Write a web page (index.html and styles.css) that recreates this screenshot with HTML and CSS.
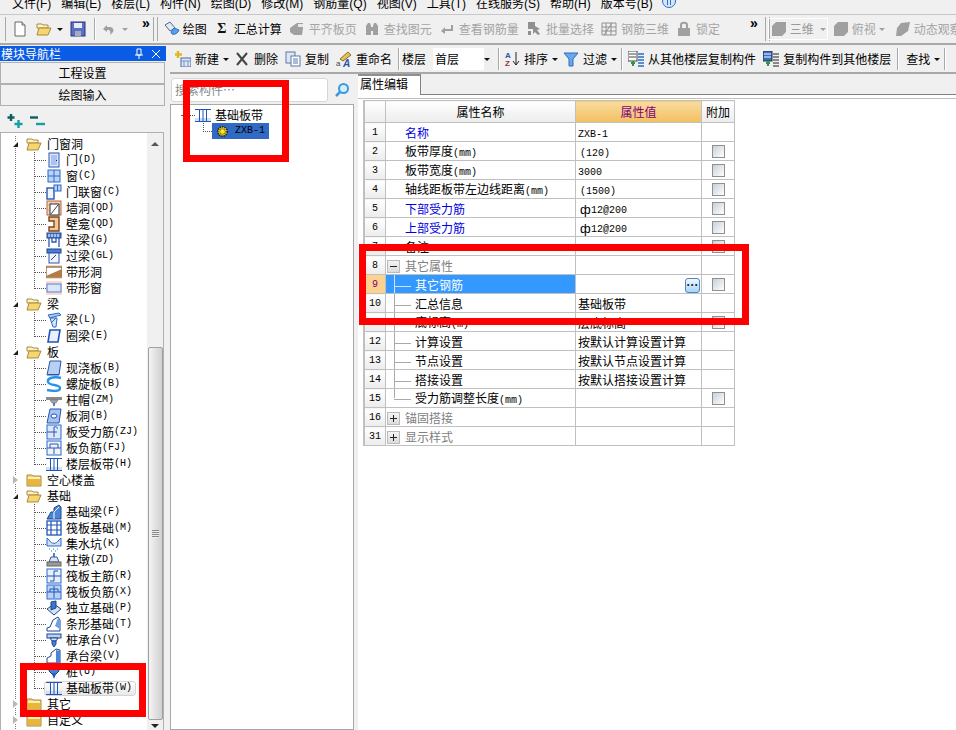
FILE: index.html
```html
<!DOCTYPE html>
<html lang="zh-CN">
<head>
  <meta charset="UTF-8">
  <title>模块导航栏</title>
  <link rel="stylesheet" href="styles.css">
</head>
<body>
<svg class="defs" width="0" height="0">
  <symbol id="folder-open" viewBox="0 0 16 16"><path d="M1 3h5l1 1h5v3H1z" fill="#fff4c8" stroke="#a88a40"/><path d="M1 14l2-7h12l-3 7z" fill="#f7d56f" stroke="#a88a40"/></symbol>
  <symbol id="folder" viewBox="0 0 16 16"><path d="M1 3h5l1 1h8v10H1z" fill="#f7d56f" stroke="#a88a40"/><path d="M2 5h12v8H2z" fill="#e9b53a"/><path d="M2 5h12v2H2z" fill="#fff0b0"/></symbol>
  <symbol id="door" viewBox="0 0 16 16"><rect x="3" y="1" width="10" height="14" fill="#dbe6fb" stroke="#2c55b0"/><rect x="5" y="3" width="6" height="10" fill="#a9c2f0"/><rect x="10" y="8" width="1" height="1" fill="#123"/></symbol>
  <symbol id="win" viewBox="0 0 16 16"><rect x="2" y="2" width="12" height="12" fill="#b9d3f8" stroke="#2c6bc8"/><path d="M8 2v12M2 8h12" stroke="#2c6bc8"/></symbol>
  <symbol id="doorwin" viewBox="0 0 16 16"><rect x="1" y="4" width="7" height="11" fill="#eef3fd" stroke="#2c55b0" stroke-width="1.4"/><rect x="8" y="1" width="7" height="6" fill="#b9d3f8" stroke="#2c6bc8"/><path d="M11.500 1v6" stroke="#2c6bc8"/></symbol>
  <symbol id="wallhole" viewBox="0 0 16 16"><rect x="1" y="1" width="14" height="14" fill="#f6d4bb" stroke="#b8683a"/><path d="M1 5h14M1 10h14M5 1v14M10 1v14" stroke="#d9926a" stroke-width=".6"/><rect x="4" y="4" width="9" height="11" fill="#fff" stroke="#333"/><path d="M5 14l7-9" stroke="#444"/></symbol>
  <symbol id="niche" viewBox="0 0 16 16"><path d="M3 1h10v14H3v-4h5V5H3z" fill="#f3c89c" stroke="#7c4414" stroke-width="1.4"/></symbol>
  <symbol id="lianliang" viewBox="0 0 16 16"><rect x="1" y="1" width="14" height="5" fill="#4a7fd4" stroke="#1f478f"/><path d="M3 2v3M6 2v3M9 2v3M12 2v3" stroke="#fff"/><path d="M3 6v9M13 6v9M6 6v4h4V6" fill="none" stroke="#2c55b0" stroke-width="1.3"/></symbol>
  <symbol id="guoliang" viewBox="0 0 16 16"><rect x="1" y="1" width="14" height="4" fill="#4a7fd4" stroke="#1f478f"/><rect x="3" y="5" width="10" height="10" fill="#eef3fd" stroke="#2c55b0"/><path d="M5 12l5-5" stroke="#444"/></symbol>
  <symbol id="striphole" viewBox="0 0 16 16"><rect x="0" y="1" width="16" height="14" fill="#f6dcc8"/><rect x="0" y="3" width="16" height="10" fill="#fff" stroke="#6b3a14"/><path d="M0 12L16 5v8H0z" fill="#b47b45"/></symbol>
  <symbol id="stripwin" viewBox="0 0 16 16"><rect x="0" y="1" width="16" height="14" fill="#f8dcd2"/><rect x="1" y="4" width="14" height="8" fill="#dbe6fb" stroke="#5a7fd0"/></symbol>
  <symbol id="beam" viewBox="0 0 16 16"><path d="M2 3l11-2 2 2-11 3z" fill="#a9c9ef" stroke="#2c6bc8"/><path d="M4 6l3 9h3l1-9" fill="#d3e3f8" stroke="#2c6bc8"/><path d="M4 6l7 0M6 10l4-4" stroke="#2c6bc8"/></symbol>
  <symbol id="ringbeam" viewBox="0 0 16 16"><path d="M4 2h10l-2 12H2z" fill="#eaf1fd" stroke="#1f55b8" stroke-width="1.6"/></symbol>
  <symbol id="slab" viewBox="0 0 16 16"><path d="M4 1h11l-2 14H1z" fill="#b9d0f5" stroke="#2456b0"/><path d="M2 14h11v1H2z" fill="#2456b0"/></symbol>
  <symbol id="spiral" viewBox="0 0 16 16"><path d="M15 2C8 0 1 2 2 6s12 2 12 6-7 3-13 2" fill="none" stroke="#2c92e8" stroke-width="2.400"/></symbol>
  <symbol id="cap" viewBox="0 0 16 16"><rect x="0" y="5" width="16" height="3" fill="#8a8a8a"/><path d="M4 8h8l-2 3H6z" fill="#aaa" stroke="#666" stroke-width=".6"/><rect x="7" y="11" width="2" height="3" fill="#5580c8"/></symbol>
  <symbol id="slabhole" viewBox="0 0 16 16"><path d="M4 1h11l-2 14H1z" fill="#a6c2f0" stroke="#2456b0"/><ellipse cx="8" cy="8" rx="3" ry="2" fill="#fff" stroke="#1f55b8"/></symbol>
  <symbol id="rebarslab" viewBox="0 0 16 16"><rect x="1" y="1" width="14" height="14" fill="#dbe8fb" stroke="#2c6bc8"/><path d="M1 8h10M8 3v10M8 3c3-1 4 1 3 2" fill="none" stroke="#2c55b0"/></symbol>
  <symbol id="negslab" viewBox="0 0 16 16"><rect x="1" y="1" width="14" height="14" fill="#edf3fc" stroke="#2c6bc8"/><path d="M1 8h14M4 4h8M4 4v4M12 4v4M8 8v6" fill="none" stroke="#2c55b0"/></symbol>
  <symbol id="band" viewBox="0 0 16 16"><rect x="0" y="11" width="16" height="4" fill="#cfe0f8"/><path d="M0 2.500h16M0 14.500h16" stroke="#1f55b8"/><path d="M4.500 3v11M8 3v11M11.500 3v11" stroke="#1f55b8"/></symbol>
  <symbol id="fbeam" viewBox="0 0 16 16"><path d="M1 15l4-7h3V4l5-3 2 2v12z" fill="#4a86d8" stroke="#1f478f"/><path d="M8 15V8l5-5" stroke="#fff" fill="none"/></symbol>
  <symbol id="raft" viewBox="0 0 16 16"><rect x="1" y="1" width="14" height="14" fill="#fff" stroke="#1f55b8" stroke-width="1.3"/><path d="M1 5h14M1 10h14M5 1v14M11 1v14" stroke="#1f55b8" stroke-width="1.200"/></symbol>
  <symbol id="pit" viewBox="0 0 16 16"><path d="M1 2l3 3c1 3 7 3 8 0l3-3v8H1z" fill="#cfe0f8" stroke="#2c6bc8"/><path d="M3 13h1M7 13h1M11 13h1M5 15h1M9 15h1" stroke="#2c6bc8"/></symbol>
  <symbol id="pier" viewBox="0 0 16 16"><path d="M7 1h2v4H7z" fill="#5580c8"/><path d="M5 5h6l2 5H3z" fill="#d9e5f8" stroke="#3a5a9a"/><rect x="1" y="10" width="14" height="4" fill="#999" stroke="#666"/></symbol>
  <symbol id="raftmain" viewBox="0 0 16 16"><rect x="1" y="1" width="14" height="14" fill="#e6effc" stroke="#2c6bc8"/><path d="M1 8h14M8 3v10M8 3h4M4 13h4" fill="none" stroke="#1f55b8"/></symbol>
  <symbol id="raftneg" viewBox="0 0 16 16"><rect x="1" y="1" width="14" height="14" fill="#b9d3f8" stroke="#2c6bc8"/><path d="M1 8h14M4 5h8M4 5v3M12 5v3M8 2v12" fill="none" stroke="#1f55b8"/></symbol>
  <symbol id="isolated" viewBox="0 0 16 16"><path d="M1 9l7-5 7 5-7 6z" fill="#d3e3f8" stroke="#1f478f"/><path d="M5 2l5-1v7l-5 2z" fill="#3f74c8" stroke="#1f478f"/></symbol>
  <symbol id="stripf" viewBox="0 0 16 16"><path d="M1 15v-3l3-1 3-7 5-3 2 3v11z" fill="#fff" stroke="#1f478f"/><path d="M9 10l3-8 2 2v9z" fill="#6f9fe0"/></symbol>
  <symbol id="pilecap" viewBox="0 0 16 16"><rect x="1" y="2" width="14" height="4" fill="#bcd2f4" stroke="#1f478f"/><path d="M4 6h8l-2 3H6z" fill="#dbe6fb" stroke="#1f478f"/><path d="M6 9h4v3l-2 3-2-3z" fill="#4a7fd4" stroke="#1f478f"/></symbol>
  <symbol id="capbeam" viewBox="0 0 16 16"><path d="M1 15v-5l4-2V5l5-4 4 1v13z" fill="#fff" stroke="#1f478f"/><path d="M10 2l4 1v12h-4z" fill="#4a86d8"/></symbol>
  <symbol id="pile" viewBox="0 0 16 16"><rect x="7" y="0" width="2" height="4" fill="#1f478f"/><path d="M3 4h10v3l-3 3H6L3 7z" fill="#4a7fd4" stroke="#1f478f"/><path d="M6 10h4l-2 5z" fill="#1f55b8"/></symbol>
  <symbol id="gear" viewBox="0 0 14 14"><circle cx="7" cy="7" r="5" fill="#ffe820" stroke="#222" stroke-dasharray="1.500 1" stroke-width="2"/><circle cx="7" cy="7" r="3" fill="#ffe820" stroke="#222" stroke-width=".6"/></symbol>
  <symbol id="disabled-doc" viewBox="0 0 16 16"><path d="M1 7l7-5h6v5l-1 7H5L1 11z" fill="#a0a0a0"/><path d="M9 3h5v3H9z" fill="#e8e8e8"/></symbol>
  <symbol id="shape" viewBox="0 0 16 16"><path d="M5 1h10v10l-4 4H1V5z" fill="#a0a0a0"/></symbol>
</svg>

<div class="app">
  <div class="menubar">
    <span>文件(F)</span><span>编辑(E)</span><span>楼层(L)</span><span>构件(N)</span><span>绘图(D)</span><span>修改(M)</span><span>钢筋量(Q)</span><span>视图(V)</span><span>工具(T)</span><span>在线服务(S)</span><span>帮助(H)</span><span>版本号(B)</span>
    <svg class="menu-help" viewBox="0 0 16 16" width="16" height="16"><circle cx="8" cy="6" r="6.500" fill="#d6e6f8" stroke="#2c6bc8"/><path d="M6 2h1v8H6zM9 2h1v8H9z" fill="#2c6bc8"/></svg>
  </div>

  <div class="toolbar top">
    <i class="handle"></i>
    <svg class="ico new-doc" viewBox="0 0 16 16"><path d="M3 1h7l3 3v11H3z" fill="#fff" stroke="#666"/><path d="M10 1v3h3" fill="#ddd" stroke="#666"/></svg>
    <svg class="ico open-doc" viewBox="0 0 16 16"><use href="#folder-open"/></svg>
    <i class="dd dark open-dd"></i>
    <svg class="ico save-doc" viewBox="0 0 16 16"><rect x="1" y="1" width="14" height="14" fill="#5a6fc8" stroke="#27347c"/><rect x="4" y="2" width="8" height="5" fill="#e8ecf8"/><rect x="5" y="10" width="6" height="5" fill="#a8abb8"/></svg>
    <i class="sep save-sep"></i>
    <svg class="ico undo" viewBox="0 0 16 16"><path d="M3 8l4-4v2h3c3 0 4 3 3 5l-3 3c1-3 0-5-2-5H7v2z" fill="#a0a0a0"/></svg>
    <i class="dd undo-dd"></i>
    <span class="more">»</span>
    <i class="handle double"></i>
    <div class="tool first"><svg class="ico" viewBox="0 0 16 16"><path d="M1 4l5-3 5 6-5 3z" fill="#e8e8e8" stroke="#4a6aa0"/><path d="M8 13c3 1 6-1 7-4l-5-2-3 4z" fill="#5aa0e8" stroke="#2c6bc8"/></svg><span>绘图</span></div>
    <div class="tool"><span class="sigma">Σ</span><span>汇总计算</span></div>
    <div class="tool off"><svg class="ico" viewBox="0 0 16 16"><use href="#disabled-doc"/></svg><span>平齐板页</span></div>
    <div class="tool off"><svg class="ico" viewBox="0 0 16 16"><path d="M2 5l2-3h2l1 3v9H2zM9 5l1-3h2l2 3v9H9zM7 6h2v4H7z" fill="#a0a0a0"/></svg><span>查找图元</span></div>
    <div class="tool off"><svg class="ico" viewBox="0 0 16 16"><path d="M2 10l4-4v2h6V4h2v6H6v3z" fill="#a0a0a0"/></svg><span>查看钢筋量</span></div>
    <div class="tool off"><svg class="ico" viewBox="0 0 16 16"><path d="M2 1h7v4l5 3-3 1 3 4-2 1-3-3-2 2V8H2zM2 10h3v4H2z" fill="#909090"/></svg><span>批量选择</span></div>
    <div class="tool off"><svg class="ico" viewBox="0 0 16 16"><path d="M1 2h14v12H1zM1 6h14M1 10h14M5 2v12M10 2v12M3 14l8-12" fill="none" stroke="#909090"/></svg><span>钢筋三维</span></div>
    <div class="tool off"><svg class="ico" viewBox="0 0 16 16"><rect x="2" y="7" width="12" height="8" fill="#a0a0a0"/><path d="M5 7V4c0-3 6-3 6 0v3" fill="none" stroke="#a0a0a0" stroke-width="2"/></svg><span>锁定</span></div>
    <span class="more end">»</span>
    <i class="handle double right"></i>
    <div class="view-btn"><svg class="ico" viewBox="0 0 16 16"><use href="#shape"/></svg><span>三维</span><i class="dd"></i></div>
    <div class="tool off view"><svg class="ico" viewBox="0 0 16 16"><use href="#shape"/></svg><span>俯视</span><i class="dd"></i></div>
    <div class="tool off view"><svg class="ico" viewBox="0 0 16 16"><path d="M6 2l9-1-2 9-7 5H1l1-8z" fill="#a0a0a0"/></svg><span>动态观察</span></div>
  </div>

  <div class="workspace">
    <aside class="nav">
      <div class="nav-title">
        <span>模块导航栏</span>
        <svg viewBox="0 0 12 12" width="12" height="12"><path d="M4 1h4v6H4zM2 7h8M6 7v4" fill="none" stroke="#fff"/></svg>
        <svg viewBox="0 0 12 12" width="12" height="12"><path d="M2 2l8 8M10 2l-8 8" stroke="#fff"/></svg>
      </div>
      <button class="nav-btn">工程设置</button>
      <button class="nav-btn">绘图输入</button>
      <div class="nav-icons">
        <svg viewBox="0 0 17 14" width="17" height="14"><path d="M4 0v7M0.500 3.500h7" stroke="#0d5e5e" stroke-width="2.400"/><path d="M11.500 6v8M7.500 10h8" stroke="#12a0a0" stroke-width="2.400"/></svg>
        <svg viewBox="0 0 17 14" width="17" height="14"><path d="M1 3.500h8" stroke="#0d5e5e" stroke-width="2.400"/><path d="M7 10h9" stroke="#12a0a0" stroke-width="2.400"/></svg>
      </div>
      <div class="nav-tree">
        <ul class="tree">
          <li>
            <div class="group"><i class="tg open"></i><svg class="ico"><use href="#folder-open"/></svg>门窗洞</div>
            <ul class="kids">
              <li><i class="elbow"></i><svg class="ico"><use href="#door"/></svg>门<span class="en">(D)</span></li>
              <li><i class="elbow"></i><svg class="ico"><use href="#win"/></svg>窗<span class="en">(C)</span></li>
              <li><i class="elbow"></i><svg class="ico"><use href="#doorwin"/></svg>门联窗<span class="en">(C)</span></li>
              <li><i class="elbow"></i><svg class="ico"><use href="#wallhole"/></svg>墙洞<span class="en">(QD)</span></li>
              <li><i class="elbow"></i><svg class="ico"><use href="#niche"/></svg>壁龛<span class="en">(QD)</span></li>
              <li><i class="elbow"></i><svg class="ico"><use href="#lianliang"/></svg>连梁<span class="en">(G)</span></li>
              <li><i class="elbow"></i><svg class="ico"><use href="#guoliang"/></svg>过梁<span class="en">(GL)</span></li>
              <li><i class="elbow"></i><svg class="ico"><use href="#striphole"/></svg>带形洞</li>
              <li><i class="elbow"></i><svg class="ico"><use href="#stripwin"/></svg>带形窗</li>
            </ul>
          </li>
          <li>
            <div class="group"><i class="tg open"></i><svg class="ico"><use href="#folder-open"/></svg>梁</div>
            <ul class="kids">
              <li><i class="elbow"></i><svg class="ico"><use href="#beam"/></svg>梁<span class="en">(L)</span></li>
              <li><i class="elbow"></i><svg class="ico"><use href="#ringbeam"/></svg>圈梁<span class="en">(E)</span></li>
            </ul>
          </li>
          <li>
            <div class="group"><i class="tg open"></i><svg class="ico"><use href="#folder-open"/></svg>板</div>
            <ul class="kids">
              <li><i class="elbow"></i><svg class="ico"><use href="#slab"/></svg>现浇板<span class="en">(B)</span></li>
              <li><i class="elbow"></i><svg class="ico"><use href="#spiral"/></svg>螺旋板<span class="en">(B)</span></li>
              <li><i class="elbow"></i><svg class="ico"><use href="#cap"/></svg>柱帽<span class="en">(ZM)</span></li>
              <li><i class="elbow"></i><svg class="ico"><use href="#slabhole"/></svg>板洞<span class="en">(B)</span></li>
              <li><i class="elbow"></i><svg class="ico"><use href="#rebarslab"/></svg>板受力筋<span class="en">(ZJ)</span></li>
              <li><i class="elbow"></i><svg class="ico"><use href="#negslab"/></svg>板负筋<span class="en">(FJ)</span></li>
              <li><i class="elbow"></i><svg class="ico"><use href="#band"/></svg>楼层板带<span class="en">(H)</span></li>
            </ul>
          </li>
          <li><div class="group"><i class="tg"></i><svg class="ico"><use href="#folder"/></svg>空心楼盖</div></li>
          <li>
            <div class="group"><i class="tg open"></i><svg class="ico"><use href="#folder-open"/></svg>基础</div>
            <ul class="kids">
              <li><i class="elbow"></i><svg class="ico"><use href="#fbeam"/></svg>基础梁<span class="en">(F)</span></li>
              <li><i class="elbow"></i><svg class="ico"><use href="#raft"/></svg>筏板基础<span class="en">(M)</span></li>
              <li><i class="elbow"></i><svg class="ico"><use href="#pit"/></svg>集水坑<span class="en">(K)</span></li>
              <li><i class="elbow"></i><svg class="ico"><use href="#pier"/></svg>柱墩<span class="en">(ZD)</span></li>
              <li><i class="elbow"></i><svg class="ico"><use href="#raftmain"/></svg>筏板主筋<span class="en">(R)</span></li>
              <li><i class="elbow"></i><svg class="ico"><use href="#raftneg"/></svg>筏板负筋<span class="en">(X)</span></li>
              <li><i class="elbow"></i><svg class="ico"><use href="#isolated"/></svg>独立基础<span class="en">(P)</span></li>
              <li><i class="elbow"></i><svg class="ico"><use href="#stripf"/></svg>条形基础<span class="en">(T)</span></li>
              <li><i class="elbow"></i><svg class="ico"><use href="#pilecap"/></svg>桩承台<span class="en">(V)</span></li>
              <li><i class="elbow"></i><svg class="ico"><use href="#capbeam"/></svg>承台梁<span class="en">(V)</span></li>
              <li><i class="elbow"></i><svg class="ico"><use href="#pile"/></svg>桩<span class="en">(U)</span></li>
              <li class="current"><i class="elbow"></i><div class="pick"><svg class="ico"><use href="#band"/></svg>基础板带<span class="en">(W)</span></div></li>
            </ul>
          </li>
          <li><div class="group"><i class="tg"></i><svg class="ico"><use href="#folder"/></svg>其它</div></li>
          <li><div class="group"><i class="tg"></i><svg class="ico"><use href="#folder"/></svg>自定义</div></li>
        </ul>
        <div class="scrollbar">
          <i class="arrow-up"></i>
          <div class="thumb"><i class="grip"></i></div>
          <i class="arrow-down"></i>
        </div>
      </div>
    </aside>

    <div class="content">
      <div class="toolbar second">
        <div class="tool drop"><svg class="ico" viewBox="0 0 16 16"><path d="M3 0v7M0 3.500h7" stroke="#e0b820" stroke-width="2.500"/><rect x="6" y="7" width="10" height="9" fill="#dce6f5" stroke="#4a6aa0"/><path d="M6 10h10M9 10v6M13 10v6" stroke="#7a95c0"/></svg><span>新建</span><i class="dd dark"></i></div>
        <div class="tool"><svg class="ico" viewBox="0 0 16 16"><path d="M3 2l10 12M13 2L3 14" stroke="#444" stroke-width="2"/></svg><span>删除</span></div>
        <div class="tool"><svg class="ico" viewBox="0 0 16 16"><rect x="1" y="1" width="9" height="11" fill="#dce6f5" stroke="#5a78a8"/><rect x="6" y="5" width="9" height="10" fill="#fff" stroke="#5a78a8"/><path d="M8 8h5M8 10h5M8 12h5" stroke="#5a78a8"/></svg><span>复制</span></div>
        <div class="tool"><svg class="ico" viewBox="0 0 16 16"><path d="M4 8l8-7 3 3-8 6z" fill="#e0c060" stroke="#8a7020"/><text x="0" y="15" class="ico-a">a</text><text x="7" y="16" class="ico-big">A</text></svg><span>重命名</span></div>
        <i class="sep"></i>
        <span class="floor-label">楼层</span>
        <div class="combo"><span>首层</span><i class="dd dark"></i></div>
        <i class="sep"></i>
        <div class="tool drop after-sep"><svg class="ico" viewBox="0 0 16 16"><text x="1" y="7" class="ico-s blue">A</text><text x="1" y="15" class="ico-s red">Z</text><path d="M12 1v13M9 10l3 4 3-4" fill="none" stroke="#222"/></svg><span>排序</span><i class="dd dark"></i></div>
        <div class="tool drop"><svg class="ico" viewBox="0 0 16 16"><path d="M1 2h14L10 8v7H6V8z" fill="#6aa8e8" stroke="#2c6bc8"/></svg><span>过滤</span><i class="dd dark"></i></div>
        <i class="sep"></i>
        <div class="tool copy-from"><svg class="ico" viewBox="0 0 16 16"><rect x="0" y="0" width="9" height="10" fill="#fff" stroke="#444"/><path d="M1 3h7M1 6h7" stroke="#444"/><path d="M3 12h4M5 10v5" stroke="#2a9a3a" stroke-width="2"/><path d="M10 3h6M10 6h6M10 9h6M10 12h6M10 15h6" stroke="#2c6bc8" stroke-width="1.500"/></svg><span>从其他楼层复制构件</span></div>
        <div class="tool"><svg class="ico" viewBox="0 0 16 16"><rect x="0" y="0" width="9" height="10" fill="#3a6ac8" stroke="#234"/><path d="M1 3h7M1 6h7" stroke="#fff"/><path d="M3 12h4M5 10v5" stroke="#2a9a3a" stroke-width="2"/><path d="M10 3h6M10 6h6M10 9h6M10 12h6M10 15h6" stroke="#666" stroke-width="1.500"/></svg><span>复制构件到其他楼层</span></div>
        <i class="sep"></i>
        <div class="tool drop find"><span>查找</span><i class="dd dark"></i></div>
        <i class="sep"></i>
      </div>

      <div class="panes">
        <section class="list-pane">
          <div class="search">
            <div class="search-box">搜索构件…</div>
            <svg viewBox="0 0 16 16" width="16" height="16"><circle cx="9.500" cy="6.500" r="4.500" fill="#d8ecfb" stroke="#3a9ae0" stroke-width="2"/><path d="M6 10l-4 4" stroke="#3a9ae0" stroke-width="2.500"/></svg>
          </div>
          <div class="list-tree">
            <div class="list-root"><i class="tick"></i><svg class="ico"><use href="#band"/></svg>基础板带</div>
            <div class="list-item"><i class="elbow"></i><div class="selected"><svg class="ico small"><use href="#gear"/></svg><span class="en">ZXB-1</span></div></div>
          </div>
        </section>

        <section class="prop-pane">
          <div class="tabs"><div class="tab">属性编辑</div></div>
          <div class="grid-wrap">
            <table class="props">
              <colgroup><col class="c-idx"><col class="c-name"><col class="c-val"><col class="c-add"></colgroup>
              <tr><th></th><th>属性名称</th><th class="hot">属性值</th><th>附加</th></tr>
              <tr><td class="idx">1</td><td class="name link">名称</td><td class="val"><span class="en">ZXB-1</span></td><td></td></tr>
              <tr><td class="idx">2</td><td class="name">板带厚度<span class="en">(mm)</span></td><td class="val"><span class="en in">(120)</span></td><td class="add"><i class="check"></i></td></tr>
              <tr><td class="idx">3</td><td class="name">板带宽度<span class="en">(mm)</span></td><td class="val"><span class="en">3000</span></td><td class="add"><i class="check"></i></td></tr>
              <tr><td class="idx">4</td><td class="name">轴线距板带左边线距离<span class="en">(mm)</span></td><td class="val"><span class="en in">(1500)</span></td><td class="add"><i class="check"></i></td></tr>
              <tr><td class="idx">5</td><td class="name link">下部受力筋</td><td class="val"><span class="en in"><b class="grade">ф</b>12@200</span></td><td class="add"><i class="check"></i></td></tr>
              <tr><td class="idx">6</td><td class="name link">上部受力筋</td><td class="val"><span class="en in"><b class="grade">ф</b>12@200</span></td><td class="add"><i class="check"></i></td></tr>
              <tr><td class="idx">7</td><td class="name">备注</td><td class="val"></td><td class="add"><i class="check"></i></td></tr>
              <tr><td class="idx">8</td><td class="sect"><i class="fold minus"></i>其它属性</td><td></td><td></td></tr>
              <tr><td class="idx on">9</td><td class="leaf sel"><i class="dash"></i>其它钢筋</td><td class="val more-cell"><i class="dots">···</i></td><td class="add"><i class="check"></i></td></tr>
              <tr><td class="idx">10</td><td class="leaf"><i class="dash"></i>汇总信息</td><td class="val">基础板带</td><td></td></tr>
              <tr><td class="idx">11</td><td class="leaf"><i class="dash"></i>底标高<span class="en">(m)</span></td><td class="val">层底标高</td><td class="add"><i class="check"></i></td></tr>
              <tr><td class="idx">12</td><td class="leaf"><i class="dash"></i>计算设置</td><td class="val">按默认计算设置计算</td><td></td></tr>
              <tr><td class="idx">13</td><td class="leaf"><i class="dash"></i>节点设置</td><td class="val">按默认节点设置计算</td><td></td></tr>
              <tr><td class="idx">14</td><td class="leaf"><i class="dash"></i>搭接设置</td><td class="val">按默认搭接设置计算</td><td></td></tr>
              <tr><td class="idx">15</td><td class="leaf last"><i class="dash"></i>受力筋调整长度<span class="en">(mm)</span></td><td class="val"></td><td class="add"><i class="check"></i></td></tr>
              <tr><td class="idx">16</td><td class="sect"><i class="fold plus"></i>锚固搭接</td><td></td><td></td></tr>
              <tr><td class="idx">31</td><td class="sect"><i class="fold plus"></i>显示样式</td><td></td><td></td></tr>
            </table>
          </div>
        </section>
      </div>
    </div>
  </div>
</div>

<div class="mark mark-list"></div>
<div class="mark mark-row"></div>
<div class="mark mark-nav"></div>
</body>
</html>
```

FILE: styles.css
```css
* { box-sizing: border-box; }
html, body { margin: 0; height: 730px; overflow: hidden; }
body {
  position: relative;
  font: 12px/16px "Noto Sans CJK SC", "Liberation Sans", sans-serif;
  color: #000;
  background: #f0f0f0;
}
ul { list-style: none; margin: 0; padding: 0; }
i { display: block; font-style: normal; }
.defs { position: absolute; }
.en { font-family: "Liberation Mono", "Noto Sans CJK SC", monospace; font-size: 10px; line-height: 1; }
.ico { display: block; width: 16px; height: 16px; flex: none; }
.app { display: flex; flex-direction: column; height: 730px; }

/* menu */
.menubar {
  display: flex;
  align-items: center;
  gap: 10px;
  height: 15px;
  padding-left: 12px;
  overflow: hidden;
  border-bottom: 1px solid #c8c8c8;
  font-family: "Liberation Sans", "Noto Sans CJK SC", sans-serif;
  line-height: 8px;
}
.menubar span { position: relative; top: -3px; white-space: nowrap; }
.menu-help { flex: none; margin-top: -8px; margin-left: -2px; }

/* toolbars */
.toolbar { display: flex; align-items: center; white-space: nowrap; overflow: hidden; }
.toolbar.top { height: 30px; padding-left: 5px; border-bottom: 2px solid #a8a8a8; margin-bottom: 1px; }
.toolbar.second { height: 28px; padding-left: 5px; border-bottom: 2px solid #a8a8a8; }
.tool { display: flex; align-items: center; gap: 4px; margin-right: 7px; flex: none; }
.tool.drop { margin-right: 5px; }
.tool.first { margin-left: 6px; gap: 3px; }
.tool.off { color: #a4a4a4; }
.tool.view { gap: 3px; margin-right: 10px; }
.tool.after-sep { margin-left: 2px; }
.tool.copy-from { margin-left: 3px; }
.tool.find { margin-left: 5px; }
.sigma { width: 16px; text-align: center; font: bold 14px "Liberation Serif", serif; color: #111; }
.handle { width: 2px; height: 24px; border-left: 1px solid #a8a8a8; flex: none; }
.handle.double { width: 5px; border-right: 1px solid #a8a8a8; margin-left: 3px; }
.handle.right { margin-left: 7px; }
.sep { width: 2px; height: 22px; border-left: 1px solid #a8a8a8; border-right: 1px solid #fff; margin: 0 2px 0 -1px; flex: none; }
.save-sep { margin: 0 4px 0 8px; }
.dd { width: 0; height: 0; border: 3px solid transparent; border-top: 3px solid #a0a0a0; border-bottom: 0; flex: none; }
.dd.dark { border-top-color: #111; }
.new-doc { margin-left: 5px; }
.open-doc { margin-left: 8px; }
.open-dd { margin-left: 5px; }
.save-doc { margin-left: 7px; }
.undo-dd { margin-left: 6px; }
.more { font: bold 14px/12px "Liberation Sans", sans-serif; margin: -12px 0 0 14px; }
.more.end { margin-left: 23px; }
.view-btn {
  display: flex; align-items: center; gap: 3px;
  width: 60px; height: 22px; padding-left: 2px;
  margin: 0 5px 0 -2px; flex: none;
  border: 1px solid #fff;
  color: #9a9a9a;
}
.view-btn .dd { margin-left: 3px; }
.floor-label { margin-right: 7px; }
.combo {
  display: flex; align-items: center; justify-content: space-between;
  width: 60px; height: 22px; padding: 0 3px 0 2px;
  margin-right: 6px;
  background: linear-gradient(to right, #fff 85%, #efefef 85%);
}
.ico-a { font: 8px "Liberation Sans", sans-serif; fill: #444; }
.ico-big { font: italic bold 10px "Liberation Sans", sans-serif; fill: #2456b0; }
.ico-s { font: bold 8px "Liberation Sans", sans-serif; }
.ico-s.blue { fill: #2c55b0; }
.ico-s.red { fill: #a03030; }

/* layout */
.workspace { flex: 1; display: flex; min-height: 0; }
.nav { width: 170px; flex: none; padding-right: 4px; display: flex; flex-direction: column; }
.content { flex: 1; min-width: 0; display: flex; flex-direction: column; }
.panes { flex: 1; display: flex; min-height: 0; }

/* navigation */
.nav-title {
  display: flex; align-items: center; gap: 5px;
  height: 15px; margin-bottom: 1px; padding-right: 4px;
  background: #0a5ce6; color: #fff;
}
.nav-title span { flex: 1; padding-left: 1px; }
.nav-btn {
  display: block; flex: none; width: 165px; height: 22px; padding: 0;
  border: 1px solid #b0b0b0;
  background: #f0f0f0;
  font: inherit; color: #000; text-align: center;
}
.nav-icons { display: flex; flex: none; gap: 5px; height: 25px; padding: 7px 0 0 7px; margin-top: 1px; }
.nav-tree {
  flex: 1; display: flex; min-height: 0; width: 164px;
  padding-top: 3px; overflow: hidden;
  background: #fff;
  border-top: 1px solid #b0b0b0;
  border-left: 1px solid #b0b0b0;
  border-right: 1px solid #b0b0b0;
}
.tree {
  flex: 1; min-width: 0;
  background: repeating-linear-gradient(#777 0 1px, transparent 1px 2px) 14px 0 / 1px 100% no-repeat;
}
.group { display: flex; align-items: center; height: 16px; padding-left: 12px; gap: 4px; }
.group .ico { margin-right: 1px; }
.tg { width: 0; height: 0; margin-right: 4px; flex: none; border: 4px solid transparent; border-left: 5px solid #b8b8b8; border-right: 0; background: #fff; }
.tg.open { border: 0; border-bottom: 5px solid #222; border-left: 5px solid transparent; }
.kids { margin-left: 33px; }
.kids li {
  display: flex; align-items: center; height: 16px; white-space: nowrap;
  background: repeating-linear-gradient(#777 0 1px, transparent 1px 2px) 0 0 / 1px 100% no-repeat;
}
.kids li:last-child { background: none; }
.kids .ico { margin-right: 4px; }
.elbow { width: 12px; height: 9px; align-self: flex-start; flex: none; border-left: 1px dotted #555; border-bottom: 1px dotted #555; }
.pick {
  display: flex; align-items: center; height: 15px; padding-right: 3px; margin-left: -2px; padding-left: 1px;
  border: 1px solid #d4d4d4; border-radius: 3px;
  background: linear-gradient(#fff, #e8e8e8);
}
.scrollbar {
  width: 16px; flex: none; display: flex; flex-direction: column; align-items: center;
  margin: -3px 0 0 0; padding-top: 9px;
  background: #f0f0f0;
}
.arrow-up { width: 0; height: 0; border: 4px solid transparent; border-top: 0; border-bottom: 4px solid #555; }
.thumb {
  width: 15px; height: 373px; margin-top: 201px; flex: none;
  display: flex; align-items: center; justify-content: center;
  border: 1px solid #a0a0a0; border-radius: 2px;
  background: linear-gradient(to right, #f4f4f4, #d0d0d0);
}
.grip { width: 7px; height: 8px; background: repeating-linear-gradient(#888 0 1px, #eee 1px 2px); }
.arrow-down { width: 0; height: 0; margin-top: 4px; border: 4px solid transparent; border-bottom: 0; border-top: 4px solid #222; }

/* component list */
.list-pane { width: 188px; flex: none; padding-right: 4px; display: flex; flex-direction: column; }
.search { display: flex; align-items: center; gap: 6px; height: 30px; padding: 2px 0 0 1px; }
.search-box {
  width: 157px; height: 24px; padding: 3px 3px;
  border: 1px solid #d6d6d6; border-radius: 3px;
  background: #fff; color: #888;
}
.list-tree { flex: 1; padding: 2px 0 0 11px; background: #fff; border: 1px solid #a8a8a8; }
.list-root { display: flex; align-items: center; height: 16px; gap: 4px; }
.tick { width: 14px; height: 9px; align-self: flex-start; margin-left: -1px; margin-right: -4px; border-bottom: 1px dotted #555; }
.list-item { display: flex; margin-left: 21px; height: 17px; }
.list-item .elbow { width: 9px; }
.selected { display: flex; align-items: center; gap: 6px; width: 57px; height: 16px; padding-left: 4px; background: #316ac5; }
.ico.small { width: 13px; height: 13px; margin: 0; }

/* property editor */
.prop-pane { flex: 1; min-width: 0; background: #fff; }
.tabs { height: 21px; background: #f0f0f0; border-bottom: 1px solid #808080; }
.tab { width: 63px; height: 21px; padding-left: 2px; background: #fff; border: 1px solid #808080; border-left: 0; border-bottom: 0; border-top: 2px solid #909090; }
.grid-wrap { margin-top: 3px; padding: 1px 0 0 6px; border-top: 1px solid #c0c0c0; }
.props {
  table-layout: fixed; border-collapse: collapse;
  width: 370px;
  background: #fff;
  box-shadow: -1px 0 0 #c0c0c0;
  line-height: 15px;
}
.c-idx { width: 21px; }
.c-name { width: 190px; }
.c-val { width: 126px; }
.c-add { width: 33px; }
.props th, .props td { border: 1px solid #c0c0c0; height: 19px; padding: 0; white-space: nowrap; font-weight: normal; }
.props th { height: 22px; text-align: center; background: linear-gradient(#fff, #ececec); }
.props th.hot { color: #800080; background: linear-gradient(#fadb9e, #f2c060); }
.props td.idx { text-align: center; font: 10px/15px "Liberation Mono", monospace; background: linear-gradient(#fff, #ececec); }
.props td.idx.on { color: #800080; background: #fdd28f; }
.props td.name { padding-left: 19px; }
.link { color: #0000e0; }
.props td.val { padding-left: 2px; }
.val .in { padding-left: 2px; }
.grade { display: inline-block; width: 11px; font: 13px/10px "Liberation Sans", sans-serif; vertical-align: -1px; }
.add { text-align: center; }
.check {
  width: 13px; height: 13px; margin: 0 auto;
  border: 1px solid #909090;
  background: linear-gradient(135deg, #c8d0d8, #fff);
}
.props td.sect { padding-left: 1px; color: #808080; }
.fold { display: inline-block; vertical-align: -2px; width: 13px; height: 13px; margin-right: 5px; border: 1px solid #bbb; }
.fold.minus { background: linear-gradient(#222, #222) center / 7px 1px no-repeat, linear-gradient(#f4f4f4, #dcdcdc); }
.fold.plus { background: linear-gradient(#222, #222) center / 7px 1px no-repeat, linear-gradient(#222, #222) center / 1px 7px no-repeat, linear-gradient(#f4f4f4, #dcdcdc); }
.props td.leaf {
  padding-left: 8px;
  background: linear-gradient(#aaa, #aaa) 8px 0 / 1px 100% no-repeat;
}
.props td.leaf.last { background: linear-gradient(#aaa, #aaa) 8px 0 / 1px 50% no-repeat; }
.props td.leaf.sel { color: #fff; background: linear-gradient(#cfe4fb, #cfe4fb) 8px 0 / 1px 100% no-repeat, #3399ff; }
.dash { display: inline-block; vertical-align: middle; width: 17px; height: 1px; margin-right: 4px; background: #aaa; }
.sel .dash { background: #cfe4fb; }
.props td.more-cell { padding-right: 1px; text-align: right; }
.dots {
  display: inline-block; vertical-align: middle;
  width: 15px; height: 15px;
  font: bold 12px/12px "Liberation Sans", sans-serif; text-align: center; color: #123;
  border: 1px solid #4a88c8; border-radius: 3px;
  background: linear-gradient(#f0f8ff, #a8d4f8);
}

/* red annotations drawn over the screenshot */
.mark { position: absolute; border: 7px solid #ff0000; }
.mark-list { left: 183px; top: 80px; width: 106px; height: 82px; }
.mark-row { left: 359px; top: 244px; width: 390px; height: 81px; }
.mark-nav { left: 20px; top: 663px; width: 126px; height: 54px; }
```
